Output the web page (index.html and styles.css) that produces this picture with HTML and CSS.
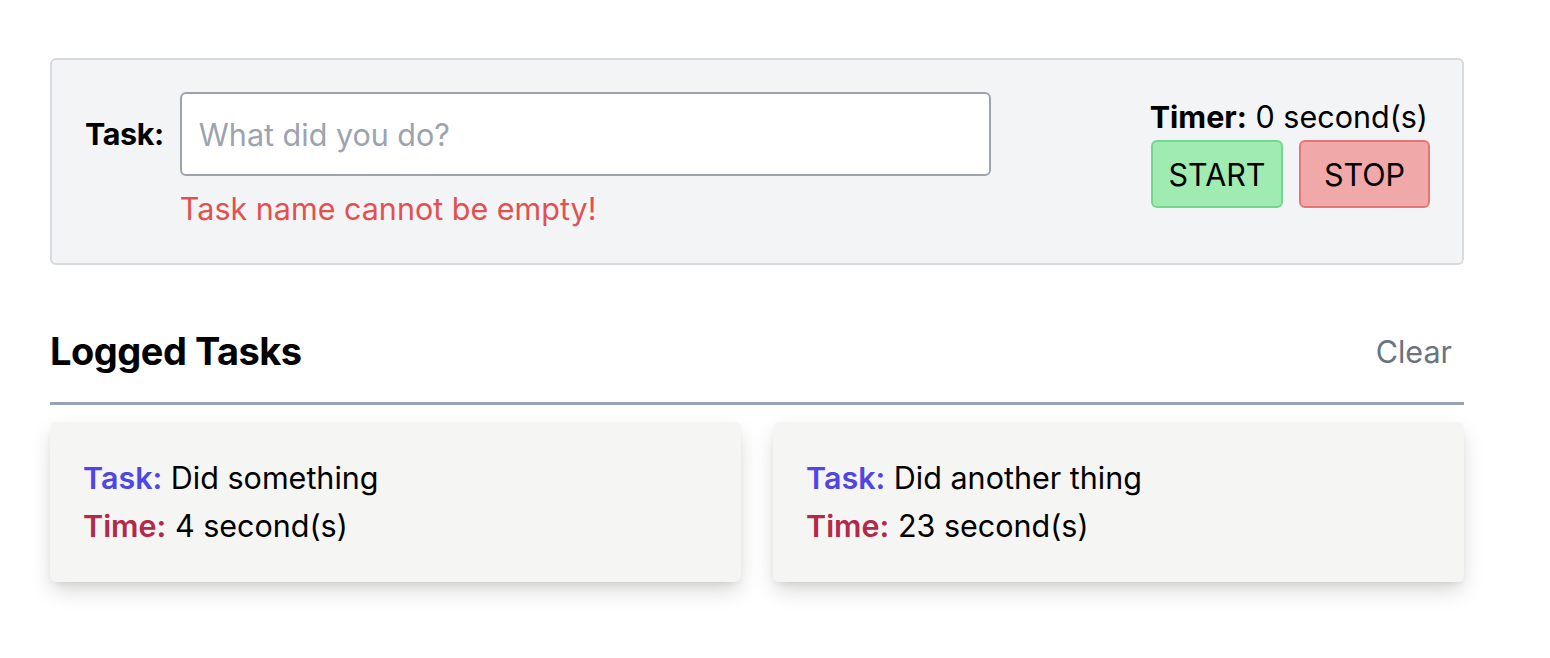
FILE: index.html
```html
<!DOCTYPE html>
<html lang="en">
<head>
<meta charset="utf-8">
<title>Task Timer</title>
<link rel="stylesheet" href="styles.css">
</head>
<body>
<main class="container">
  <section class="panel">
    <div class="task-form">
      <label class="task-label" for="task">Task:</label>
      <input id="task" class="task-input" type="text" placeholder="What did you do?">
      <p class="error">Task name cannot be empty!</p>
    </div>
    <div class="timer">
      <div class="timer-text"><strong>Timer:</strong> 0 second(s)</div>
      <div class="buttons">
        <button class="btn btn-start">START</button>
        <button class="btn btn-stop">STOP</button>
      </div>
    </div>
  </section>

  <section class="logged">
    <div class="logged-head">
      <h2 class="logged-title">Logged Tasks</h2>
      <button class="clear">Clear</button>
    </div>
    <div class="cards">
      <article class="card">
        <div class="line"><span class="k-task">Task:</span> Did something</div>
        <div class="line"><span class="k-time">Time:</span> 4 second(s)</div>
      </article>
      <article class="card">
        <div class="line"><span class="k-task">Task:</span> Did another thing</div>
        <div class="line"><span class="k-time">Time:</span> 23 second(s)</div>
      </article>
    </div>
  </section>
</main>
</body>
</html>
```

FILE: styles.css
```css
* { box-sizing: border-box; }
html, body { margin: 0; padding: 0; background: #fff; }
body {
  font-family: Inter, "Noto Sans", "Liberation Sans", sans-serif;
  font-size: 30.5px;
  color: #000;
}
.container {
  width: 1414px;
  margin-left: 50px;
  padding-top: 58px;
  padding-bottom: 60px;
}
.panel {
  display: flex;
  justify-content: space-between;
  align-items: center;
  background: #f3f4f6;
  border: 2px solid #d8dadf;
  border-radius: 6px;
  padding: 32px 32px 38px 33px;
}
.task-form {
  display: grid;
  grid-template-columns: auto 811px;
  column-gap: 16px;
  align-items: center;
}
.task-label {
  font-weight: 700;
  line-height: 32px;
  letter-spacing: -0.4px;
}
.task-input {
  height: 84px;
  border: 2px solid #9ea4af;
  border-radius: 6px;
  background: #fff;
  padding: 0 17px;
  font: inherit;
  color: #111;
  outline: none;
}
.task-input::placeholder { color: #9ca3af; }
.error {
  grid-column: 2;
  margin: 17px 0 0;
  line-height: 32px;
  color: #e05250;
}
.timer {
  display: flex;
  flex-direction: column;
  align-items: flex-end;
  gap: 7px;
  margin-top: -8px;
}
.timer-text { line-height: 32px; margin-right: 2px; }
.buttons { display: flex; gap: 16px; }
.btn {
  font: inherit;
  color: #000;
  width: 132px;
  height: 68px;
  border-radius: 6px;
  border: 2px solid;
  padding: 0;
  cursor: pointer;
}
.btn-start { background: #a0ebb2; border-color: #72d98c; }
.btn-stop { background: #f1a8a8; border-color: #e57676; width: 131px; }

.logged { margin-top: 66px; }
.logged-head {
  display: flex;
  justify-content: space-between;
  align-items: center;
  padding-bottom: 31px;
  border-bottom: 3px solid #94a3b8;
}
.logged-title {
  margin: 0;
  font-size: 38px;
  line-height: 40px;
  font-weight: 700;
  letter-spacing: -0.5px;
}
.clear {
  background: none;
  border: none;
  font: inherit;
  color: #6b7280;
  padding: 0 12px;
  cursor: pointer;
}
.cards {
  display: grid;
  grid-template-columns: 1fr 1fr;
  gap: 32px;
  margin-top: 17px;
}
.card {
  background: #f5f5f4;
  border-radius: 6px;
  padding: 32px 33px;
  box-shadow: 0 10px 22px -2px rgba(0,0,0,0.16), 0 4px 8px -4px rgba(0,0,0,0.12);
}
.line { line-height: 48px; }
.k-task { color: #5046e4; font-weight: 600; }
.k-time { color: #b2294a; font-weight: 600; }
```
